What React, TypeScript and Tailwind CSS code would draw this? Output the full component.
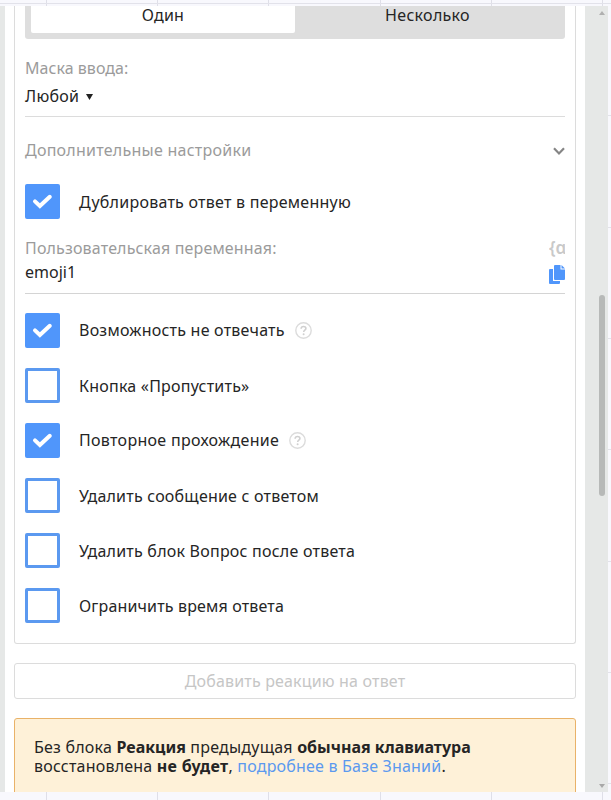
import React from 'react';
import clsx from 'clsx';

interface OptionProps {
  label: string;
  checked?: boolean;
  help?: boolean;
  className?: string;
}

const Option: React.FC<OptionProps> = ({ label, checked, help, className }) => (
  <div className="flex h-[35px] items-center">
    <div
      className={clsx(
        'flex h-[35px] w-[35px] shrink-0 items-center justify-center rounded-[2px]',
        checked ? 'bg-[#5096fb]' : 'border-[3px] border-[#5b99f0] bg-white'
      )}
    >
      {checked && (
        <svg width="21" height="17" viewBox="0 0 21 17" fill="none">
          <path d="M3 8.4 7.9 13 17.8 3.8" stroke="#fff" strokeWidth="4" strokeLinecap="round" />
        </svg>
      )}
    </div>
    <span className={clsx('ml-[19px] whitespace-nowrap', className)}>{label}</span>
    {help && (
      <svg className="ml-[10px] shrink-0" width="17" height="17" viewBox="0 0 17 17" fill="none">
        <circle cx="8.5" cy="8.5" r="7.7" stroke="#dcdcdc" strokeWidth="1.4" />
        <path d="M6.1 6.7c.1-1.5 1.1-2.2 2.4-2.2 1.4 0 2.4.8 2.4 2 0 1.6-2.2 1.8-2.2 3.4" stroke="#d0d0d0" strokeWidth="1.6" />
        <circle cx="8.6" cy="12.2" r="1" fill="#d0d0d0" />
      </svg>
    )}
  </div>
);

/** Canvas grid lines that show around the panel */
const CanvasGrid: React.FC = () => (
  <svg className="absolute inset-0" width="611" height="800">
    {[46.5, 157.5, 268.5, 380.5, 491.5, 602.5].map((x) => (
      <line key={x} x1={x} x2={x} y1="0" y2="800" stroke="#dfdfe8" />
    ))}
    {[3.5, 115.5, 227.5, 338.5, 449.5, 561.5, 672.5, 783.5].map((y) => (
      <line key={y} x1="0" x2="611" y1={y} y2={y} stroke="#e2e2ea" />
    ))}
  </svg>
);

const Scrollbar: React.FC = () => (
  <div className="flex w-[23px] flex-col items-end bg-[#e6e8e7] pr-[3px]">
    <svg className="mt-[5px]" width="6" height="4" viewBox="0 0 6 4">
      <path d="M3 0 6 4H0z" fill="#b0b0b0" />
    </svg>
    <div className="mt-[280px] h-[201px] w-[6px] rounded-full bg-[#b7b9b8]" />
    <svg className="mt-auto mb-[4px]" width="6" height="4" viewBox="0 0 6 4">
      <path d="M0 0h6L3 4z" fill="#a8a8a8" />
    </svg>
  </div>
);

const App: React.FC = () => (
  <div className="relative h-[800px] w-[611px] overflow-hidden bg-[#f8f8fd] pt-[6px] font-['Noto_Sans',sans-serif] text-[16px] leading-[20px] text-[#252525]">
    <CanvasGrid />
    <div className="relative flex h-[786px] w-[608px] overflow-hidden">
      <div className="w-[5px] shrink-0 bg-[#e6e8e7]" />
      <div className="w-[580px] shrink-0 bg-white px-[9px]">
        <div className="h-[638px] rounded-b-[3px] border border-t-0 border-[#dcdcdc] px-[10px]">
          {/* Answer count switch */}
          <div className="flex h-[33px] rounded-b-[3px] bg-[#dedede] pb-[6px] pl-[6px]">
            <div className="flex w-[264px] justify-center rounded-b-[2px] bg-white">
              <span className="-mt-px tracking-[0.2px]">Один</span>
            </div>
            <div className="flex flex-1 justify-center pr-[5px]">
              <span className="-mt-px tracking-[0.3px]">Несколько</span>
            </div>
          </div>

          <div className="flex h-[78px] flex-col border-b border-[#dcdcdc] pt-[19px]">
            <span className="self-start text-[#9b9b9b] tracking-[0.04px]">Маска ввода:</span>
            <div className="mt-[8px] flex items-center">
              <span className="tracking-[0.25px]">Любой</span>
              <svg className="ml-[7px] mt-px" width="7" height="6" viewBox="0 0 7 6">
                <path d="M0 0h7L3.5 6z" fill="#222" />
              </svg>
            </div>
          </div>

          <div className="mt-[23px] flex h-[20px] items-center justify-between">
            <span className="text-[#9b9b9b] tracking-[0.25px]">Дополнительные настройки</span>
            <svg className="mt-[2px]" width="12" height="8" viewBox="0 0 12 8" fill="none">
              <path d="M1 1.2 6 6.4l5-5.2" stroke="#858585" strokeWidth="2.2" />
            </svg>
          </div>

          <div className="mt-[24px]">
            <Option label="Дублировать ответ в переменную" checked className="tracking-[0.25px]" />
          </div>

          <div className="mt-[19px] flex h-[56px] justify-between border-b border-[#d4d4d4]">
            <div className="flex flex-col">
              <span className="text-[#9b9b9b] tracking-[0.16px]">Пользовательская переменная:</span>
              <span className="mt-[4px] self-start">emoji1</span>
            </div>
            <div className="flex w-[16px] flex-col overflow-hidden">
              <span className="h-[20px] font-['Noto_Sans',sans-serif] text-[17px] font-semibold leading-[20px] text-[#c9c9c9]">{'{α'}</span>
              <svg className="mt-[7px] shrink-0" width="16" height="19" viewBox="0 0 16 19" fill="#5096fb">
                <path d="M6 0h5.5v4.6H16V14a1 1 0 0 1-1 1H6a1 1 0 0 1-1-1V1a1 1 0 0 1 1-1z" />
                <path d="M12.5 0 16 3.6h-3.5z" />
                <path d="M0 5a1 1 0 0 1 1-1h3v12h7v2a1 1 0 0 1-1 1H1a1 1 0 0 1-1-1z" />
              </svg>
            </div>
          </div>

          <div className="mt-[19px] flex flex-col gap-[20px]">
            <Option label="Возможность не отвечать" checked help className="-mt-[2px] tracking-[0.23px]" />
            <Option label="Кнопка «Пропустить»" className="tracking-[0.22px]" />
            <Option label="Повторное прохождение" checked help className="-mt-[2px] tracking-[0.3px]" />
            <Option label="Удалить сообщение с ответом" className="tracking-[0.21px]" />
            <Option label="Удалить блок Вопрос после ответа" className="tracking-[0.23px]" />
            <Option label="Ограничить время ответа" className="tracking-[0.16px]" />
          </div>
        </div>

        <button className="mt-[19px] flex h-[36px] w-full items-center justify-center rounded-[3px] border border-[#dcdcdc] text-[#c6c6c6]">
          <span className="tracking-[0.17px]">Добавить реакцию на ответ</span>
        </button>

        <div className="mt-[19px] h-[90px] rounded-t-[3px] border border-[#e9b268] bg-[#fef1d8] pl-[19px] pt-[19px] leading-[19px]">
          <p className="whitespace-nowrap tracking-[0.22px]">
            Без блока <b className="tracking-[0px]">Реакция</b> предыдущая <b className="tracking-[0px]">обычная клавиатура</b>
          </p>
          <p className="whitespace-nowrap tracking-[0.2px]">
            восстановлена <b className="tracking-[0.3px]">не будет</b>, <a className="text-[#5b99ef] tracking-[0.2px]">подробнее в Базе Знаний</a>.
          </p>
        </div>
      </div>
      <Scrollbar />
    </div>
  </div>
);

export default App;
